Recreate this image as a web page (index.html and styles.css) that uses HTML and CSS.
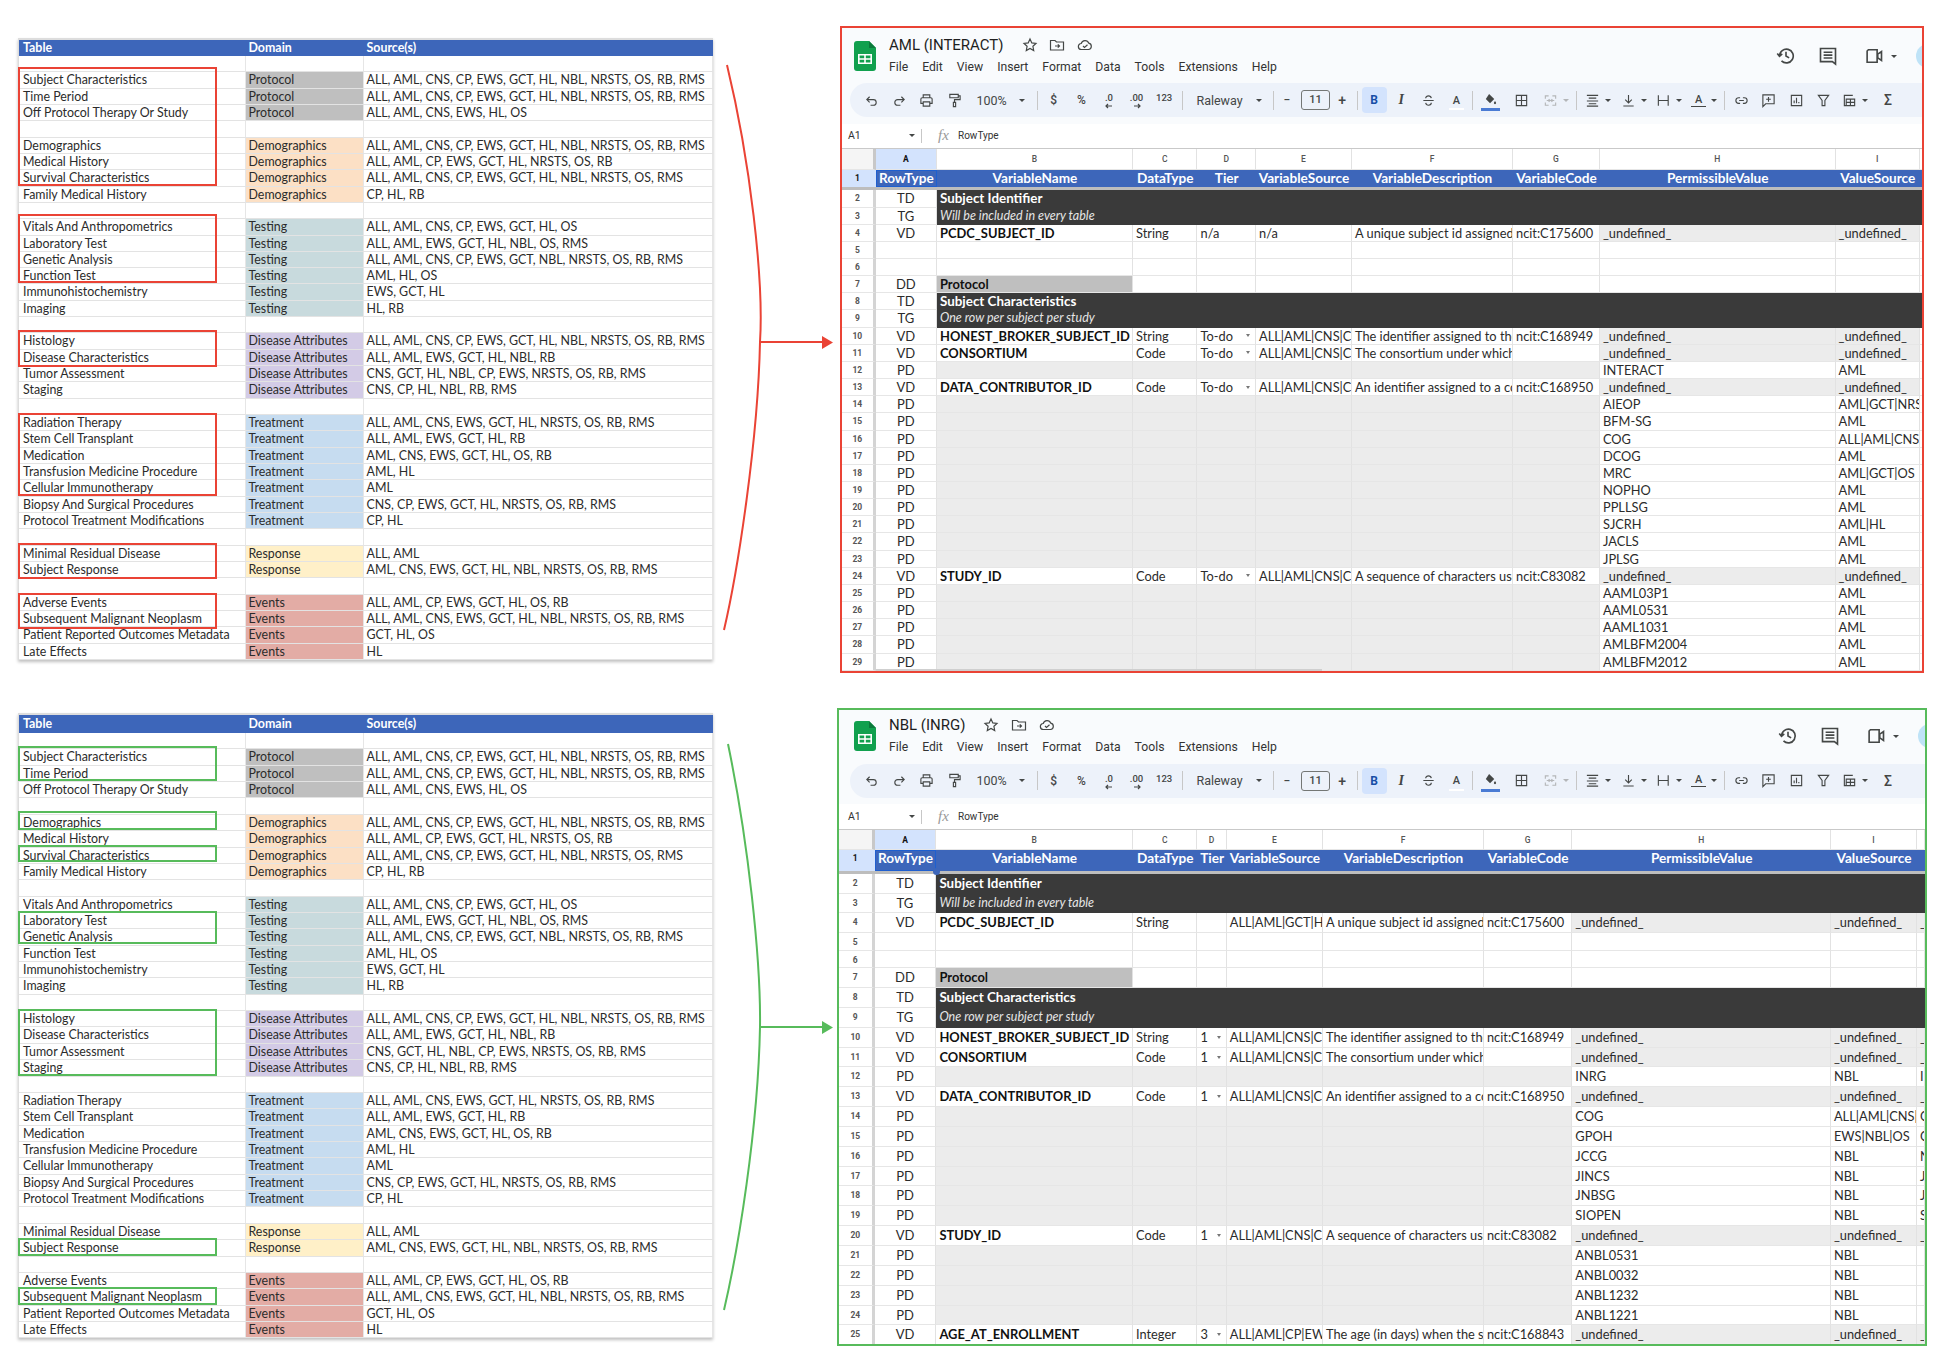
FILE: index.html
```html
<!DOCTYPE html>
<html lang="en">
<head>
    <meta charset="UTF-8">
    <title>AML and NBL data dictionaries</title>
    <link rel="stylesheet" href="styles.css">
</head>
<body>

<!-- icons used by both sheets -->
<svg class="defs" width="0" height="0">
    <symbol id="i-undo" viewBox="0 0 16 16"><path d="M6 4 3 7l3 3M3 7h7a3 3 0 0 1 0 6H7"/></symbol>
    <symbol id="i-redo" viewBox="0 0 16 16"><path d="M10 4l3 3-3 3M13 7H6a3 3 0 0 0 0 6h3"/></symbol>
    <symbol id="i-print" viewBox="0 0 16 16"><path d="M4.5 5V2h7v3M4.5 11H2V6.5A1.5 1.5 0 0 1 3.5 5h9A1.5 1.5 0 0 1 14 6.5V11h-2.5M4.5 9.5h7V14h-7z"/></symbol>
    <symbol id="i-paint" viewBox="0 0 16 16"><path d="M3 1.5h9V5H3zM12 3h2v4H8v3M6.8 10h2.4v4.5H6.8z"/></symbol>
    <symbol id="i-strike" viewBox="0 0 16 16"><path d="M2.5 8h11M11 5.5C10.7 4 9.5 3 8 3S5 4 5 5.5M5 10.5C5.3 12 6.500 13 8 13s3-1 3-2.500"/></symbol>
    <symbol id="i-fill" viewBox="0 0 16 16"><path class="solid" d="M6.500 1 12 6.500 7.500 11 3 6.500zM12.800 8.500c.8 1 1.200 1.600 1.200 2.200a1.200 1.200 0 0 1-2.400 0c0-.6.400-1.200 1.200-2.200z"/></symbol>
    <symbol id="i-borders" viewBox="0 0 16 16"><path d="M2.500 2.500h11v11h-11zM8 2.500v11M2.500 8h11"/></symbol>
    <symbol id="i-merge" viewBox="0 0 16 16"><path d="M2.500 6V3h3.500M13.500 6V3H10M2.500 10v3h3.500M13.500 10v3H10M4 8h3M12 8H9M6 6.500 7.500 8 6 9.500M10 6.500 8.500 8l1.500 1.500"/></symbol>
    <symbol id="i-align" viewBox="0 0 16 16"><path d="M2 2.500h12M4 5.500h8M2 8.500h12M4 11.500h8M2 14h12"/></symbol>
    <symbol id="i-valign" viewBox="0 0 16 16"><path d="M8 2v8M4.500 7 8 10.500 11.500 7M2.500 13.800h11"/></symbol>
    <symbol id="i-wrap" viewBox="0 0 16 16"><path d="M2.500 2.500v11M13 2.500v11M2.500 8H13"/></symbol>
    <symbol id="i-link" viewBox="0 0 16 16"><path d="M6.500 5H5a3 3 0 0 0 0 6h1.500M9.500 5H11a3 3 0 0 1 0 6H9.500M5.500 8h5"/></symbol>
    <symbol id="i-addnote" viewBox="0 0 16 16"><path d="M2 2h12v9.500H5L2 14.500zM8 4.200v5M5.500 6.700h5"/></symbol>
    <symbol id="i-chart" viewBox="0 0 16 16"><path d="M2.500 2.500h11v11h-11zM5.500 11V8M8 11V5M10.500 11V9.500"/></symbol>
    <symbol id="i-filter" viewBox="0 0 16 16"><path d="M2.500 2.500h11L9.500 8v5.500h-3V8z"/></symbol>
    <symbol id="i-calc" viewBox="0 0 16 16"><path d="M11.500 2.500h-9v11h11V6.500H4.500v7M9 6.500v7M4.500 10h9"/></symbol>
    <symbol id="i-history" viewBox="0 0 16 16"><path d="M2.800 8a5.500 5.500 0 1 1 1.600 3.900M1 6l1.800 2.200L5 6.300M8 4.500V8l2.500 1.500"/></symbol>
    <symbol id="i-comments" viewBox="0 0 16 16"><path d="M2 2h12v12.500L11.500 12.500H2zM4.500 5h7M4.500 7.300h7M4.500 9.600h7"/></symbol>
    <symbol id="i-camera" viewBox="0 0 16 16"><path d="M3.500 3h7v10h-8V4zM11 6.500l3-2v7l-3-2z"/></symbol>
    <symbol id="i-star" viewBox="0 0 16 16"><path d="M8 2l1.800 3.900 4.200.5-3.100 2.900.8 4.200L8 11.400l-3.700 2.100.8-4.200L2 6.400l4.200-.5z"/></symbol>
    <symbol id="i-folder" viewBox="0 0 16 16"><path d="M1.500 3.500h4.500l1.500 1.500h7v8h-13zM6 9h4.500M8.800 7.300 10.500 9l-1.700 1.700"/></symbol>
    <symbol id="i-cloud" viewBox="0 0 16 16"><path d="M4.500 12.500a3 3 0 0 1-.3-6 4 4 0 0 1 7.600-.3 3.200 3.200 0 0 1-.3 6.300zM6 9l1.500 1.500L10.500 7.800"/></symbol>
    <symbol id="i-sheets" viewBox="0 0 22 30">
        <path class="g-body" d="M0 3a3 3 0 0 1 3-3h12l7 7v20a3 3 0 0 1-3 3H3a3 3 0 0 1-3-3z"/>
        <path class="g-fold" d="M15 0l7 7h-7z"/>
        <path class="g-grid" d="M4 13h14v10H4zm1.600 1.600v2.600h4.600v-2.600zm6.200 0v2.600h4.600v-2.600zm-6.200 4.200v2.600h4.600v-2.600zm6.200 0v2.600h4.600v-2.600z"/>
    </symbol>
</svg>

<div class="page">

<!-- first pair: AML -->
<div class="pair pair-aml">
    <div class="src src-aml">
        <div class="r head-r"><span>Table</span><span>Domain</span><span>Source(s)</span></div>
        <div class="r"><span></span><span></span><span></span></div>
        <div class="r"><span>Subject Characteristics</span><span class="d-pro">Protocol</span><span>ALL, AML, CNS, CP, EWS, GCT, HL, NBL, NRSTS, OS, RB, RMS</span></div>
        <div class="r"><span>Time Period</span><span class="d-pro">Protocol</span><span>ALL, AML, CNS, CP, EWS, GCT, HL, NBL, NRSTS, OS, RB, RMS</span></div>
        <div class="r"><span>Off Protocol Therapy Or Study</span><span class="d-pro">Protocol</span><span>ALL, AML, CNS, EWS, HL, OS</span></div>
        <div class="r"><span></span><span></span><span></span></div>
        <div class="r"><span>Demographics</span><span class="d-dem">Demographics</span><span>ALL, AML, CNS, CP, EWS, GCT, HL, NBL, NRSTS, OS, RB, RMS</span></div>
        <div class="r"><span>Medical History</span><span class="d-dem">Demographics</span><span>ALL, AML, CP, EWS, GCT, HL, NRSTS, OS, RB</span></div>
        <div class="r"><span>Survival Characteristics</span><span class="d-dem">Demographics</span><span>ALL, AML, CNS, CP, EWS, GCT, HL, NBL, NRSTS, OS, RMS</span></div>
        <div class="r"><span>Family Medical History</span><span class="d-dem">Demographics</span><span>CP, HL, RB</span></div>
        <div class="r"><span></span><span></span><span></span></div>
        <div class="r"><span>Vitals And Anthropometrics</span><span class="d-tes">Testing</span><span>ALL, AML, CNS, CP, EWS, GCT, HL, OS</span></div>
        <div class="r"><span>Laboratory Test</span><span class="d-tes">Testing</span><span>ALL, AML, EWS, GCT, HL, NBL, OS, RMS</span></div>
        <div class="r"><span>Genetic Analysis</span><span class="d-tes">Testing</span><span>ALL, AML, CNS, CP, EWS, GCT, NBL, NRSTS, OS, RB, RMS</span></div>
        <div class="r"><span>Function Test</span><span class="d-tes">Testing</span><span>AML, HL, OS</span></div>
        <div class="r"><span>Immunohistochemistry</span><span class="d-tes">Testing</span><span>EWS, GCT, HL</span></div>
        <div class="r"><span>Imaging</span><span class="d-tes">Testing</span><span>HL, RB</span></div>
        <div class="r"><span></span><span></span><span></span></div>
        <div class="r"><span>Histology</span><span class="d-dis">Disease Attributes</span><span>ALL, AML, CNS, CP, EWS, GCT, HL, NBL, NRSTS, OS, RB, RMS</span></div>
        <div class="r"><span>Disease Characteristics</span><span class="d-dis">Disease Attributes</span><span>ALL, AML, EWS, GCT, HL, NBL, RB</span></div>
        <div class="r"><span>Tumor Assessment</span><span class="d-dis">Disease Attributes</span><span>CNS, GCT, HL, NBL, CP, EWS, NRSTS, OS, RB, RMS</span></div>
        <div class="r"><span>Staging</span><span class="d-dis">Disease Attributes</span><span>CNS, CP, HL, NBL, RB, RMS</span></div>
        <div class="r"><span></span><span></span><span></span></div>
        <div class="r"><span>Radiation Therapy</span><span class="d-tre">Treatment</span><span>ALL, AML, CNS, EWS, GCT, HL, NRSTS, OS, RB, RMS</span></div>
        <div class="r"><span>Stem Cell Transplant</span><span class="d-tre">Treatment</span><span>ALL, AML, EWS, GCT, HL, RB</span></div>
        <div class="r"><span>Medication</span><span class="d-tre">Treatment</span><span>AML, CNS, EWS, GCT, HL, OS, RB</span></div>
        <div class="r"><span>Transfusion Medicine Procedure</span><span class="d-tre">Treatment</span><span>AML, HL</span></div>
        <div class="r"><span>Cellular Immunotherapy</span><span class="d-tre">Treatment</span><span>AML</span></div>
        <div class="r"><span>Biopsy And Surgical Procedures</span><span class="d-tre">Treatment</span><span>CNS, CP, EWS, GCT, HL, NRSTS, OS, RB, RMS</span></div>
        <div class="r"><span>Protocol Treatment Modifications</span><span class="d-tre">Treatment</span><span>CP, HL</span></div>
        <div class="r"><span></span><span></span><span></span></div>
        <div class="r"><span>Minimal Residual Disease</span><span class="d-res">Response</span><span>ALL, AML</span></div>
        <div class="r"><span>Subject Response</span><span class="d-res">Response</span><span>AML, CNS, EWS, GCT, HL, NBL, NRSTS, OS, RB, RMS</span></div>
        <div class="r"><span></span><span></span><span></span></div>
        <div class="r"><span>Adverse Events</span><span class="d-eve">Events</span><span>ALL, AML, CP, EWS, GCT, HL, OS, RB</span></div>
        <div class="r"><span>Subsequent Malignant Neoplasm</span><span class="d-eve">Events</span><span>ALL, AML, CNS, EWS, GCT, HL, NBL, NRSTS, OS, RB, RMS</span></div>
        <div class="r"><span>Patient Reported Outcomes Metadata</span><span class="d-eve">Events</span><span>GCT, HL, OS</span></div>
        <div class="r"><span>Late Effects</span><span class="d-eve">Events</span><span>HL</span></div>
        <!-- highlighted tables -->
        <div class="hl hl-red m1"></div>
        <div class="hl hl-red m2"></div>
        <div class="hl hl-red m3"></div>
        <div class="hl hl-red m4"></div>
        <div class="hl hl-red m5"></div>
        <div class="hl hl-red m6"></div>
    </div>

    <div class="sheet sheet-aml">
        <div class="top">
            <svg class="logo"><use href="#i-sheets"/></svg>
            <div class="titles">
                <div class="title">AML (INTERACT)
                    <svg class="ic ic-first"><use href="#i-star"/></svg>
                    <svg class="ic"><use href="#i-folder"/></svg>
                    <svg class="ic"><use href="#i-cloud"/></svg>
                </div>
                <div class="menu"><span>File</span><span>Edit</span><span>View</span><span>Insert</span><span>Format</span><span>Data</span><span>Tools</span><span>Extensions</span><span>Help</span></div>
            </div>
            <div class="actions">
                <svg class="big"><use href="#i-history"/></svg>
                <svg class="big a-comments"><use href="#i-comments"/></svg>
                <svg class="big a-camera"><use href="#i-camera"/></svg>
                <i class="caret a-caret"></i>
                <i class="avatar"></i>
            </div>
        </div>
        <div class="barwrap">
            <div class="bar">
                <div class="tb"><svg><use href="#i-undo"/></svg></div>
                <div class="tb"><svg><use href="#i-redo"/></svg></div>
                <div class="tb"><svg><use href="#i-print"/></svg></div>
                <div class="tb"><svg><use href="#i-paint"/></svg></div>
                <div class="pick pick-zoom">100%<i class="caret"></i></div>
                <i class="sep"></i>
                <div class="tb txt">$</div>
                <div class="tb txt">%</div>
                <div class="tb txt small">.0<svg class="mini"><path d="M7 2H1M3 0 1 2l2 2"/></svg></div>
                <div class="tb txt small">.00<svg class="mini"><path d="M1 2h6M5 0l2 2-2 2"/></svg></div>
                <div class="tb txt small">123</div>
                <i class="sep sep-font"></i>
                <div class="pick pick-font">Raleway<i class="caret"></i></div>
                <i class="sep"></i>
                <div class="tb txt minus">−</div>
                <div class="size">11</div>
                <div class="tb txt plus">+</div>
                <i class="sep"></i>
                <div class="bold">B</div>
                <div class="tb txt ital">I</div>
                <div class="tb"><svg><use href="#i-strike"/></svg></div>
                <div class="tb txt under">A</div>
                <i class="sep"></i>
                <div class="tb fill"><svg><use href="#i-fill"/></svg></div>
                <div class="tb tb-borders"><svg><use href="#i-borders"/></svg></div>
                <div class="combo off"><svg><use href="#i-merge"/></svg><i class="caret"></i></div>
                <i class="sep sep-align"></i>
                <div class="combo"><svg><use href="#i-align"/></svg><i class="caret"></i></div>
                <div class="combo"><svg><use href="#i-valign"/></svg><i class="caret"></i></div>
                <div class="combo"><svg><use href="#i-wrap"/></svg><i class="caret"></i></div>
                <div class="combo"><span class="rot">A</span><i class="caret"></i></div>
                <i class="sep sep-end"></i>
                <div class="tb"><svg><use href="#i-link"/></svg></div>
                <div class="tb"><svg><use href="#i-addnote"/></svg></div>
                <div class="tb"><svg><use href="#i-chart"/></svg></div>
                <div class="tb"><svg><use href="#i-filter"/></svg></div>
                <div class="combo calc"><svg><use href="#i-calc"/></svg><i class="caret"></i></div>
                <div class="tb txt sigma">Σ</div>
            </div>
        </div>
        <div class="formula"><span class="ref">A1</span><i class="caret"></i><i class="sep"></i><span class="fx">fx</span><span>RowType</span></div>

        <div class="g letters"><span></span><span class="on">A</span><span>B</span><span>C</span><span>D</span><span>E</span><span>F</span><span>G</span><span>H</span><span>I</span><span></span></div>
        <div class="g hr"><span class="n on">1</span><span class="sel">RowType</span><span>VariableName</span><span>DataType</span><span>Tier</span><span>VariableSource</span><span>VariableDescription</span><span>VariableCode</span><span>PermissibleValue</span><span>ValueSource</span><span></span></div>
        <div class="g"><span class="n">2</span><span class="c">TD</span><span class="dark">Subject Identifier</span></div>
        <div class="g"><span class="n">3</span><span class="c">TG</span><span class="dark note">Will be included in every table</span></div>
        <div class="g"><span class="n">4</span><span class="c">VD</span><b>PCDC_SUBJECT_ID</b><span>String</span><span>n/a</span><span>n/a</span><span>A unique subject id assigned to each subject</span><span>ncit:C175600</span><span class="x">_undefined_</span><span class="x">_undefined_</span><span></span></div>
        <div class="g short"><span class="n">5</span><span></span><span></span><span></span><span></span><span></span><span></span><span></span><span></span><span></span><span></span></div>
        <div class="g short"><span class="n">6</span><span></span><span></span><span></span><span></span><span></span><span></span><span></span><span></span><span></span><span></span></div>
        <div class="g"><span class="n">7</span><span class="c">DD</span><b class="pro">Protocol</b><span></span><span></span><span></span><span></span><span></span><span></span><span></span><span></span></div>
        <div class="g"><span class="n">8</span><span class="c">TD</span><span class="dark">Subject Characteristics</span></div>
        <div class="g"><span class="n">9</span><span class="c">TG</span><span class="dark note">One row per subject per study</span></div>
        <div class="g"><span class="n">10</span><span class="c">VD</span><b>HONEST_BROKER_SUBJECT_ID</b><span>String</span><span class="dd">To-do<i class="caret"></i></span><span>ALL|AML|CNS|CP|EWS</span><span>The identifier assigned to the subject</span><span>ncit:C168949</span><span class="x">_undefined_</span><span class="x">_undefined_</span><span></span></div>
        <div class="g"><span class="n">11</span><span class="c">VD</span><b>CONSORTIUM</b><span>Code</span><span class="dd">To-do<i class="caret"></i></span><span>ALL|AML|CNS|CP|EWS</span><span>The consortium under which the study</span><span></span><span class="x">_undefined_</span><span class="x">_undefined_</span><span></span></div>
        <div class="g"><span class="n">12</span><span class="c">PD</span><span class="x"></span><span class="x"></span><span class="x"></span><span class="x"></span><span class="x"></span><span class="x"></span><span>INTERACT</span><span>AML</span><span></span></div>
        <div class="g"><span class="n">13</span><span class="c">VD</span><b>DATA_CONTRIBUTOR_ID</b><span>Code</span><span class="dd">To-do<i class="caret"></i></span><span>ALL|AML|CNS|CP|EWS</span><span>An identifier assigned to a contributor</span><span>ncit:C168950</span><span class="x">_undefined_</span><span class="x">_undefined_</span><span></span></div>
        <div class="g"><span class="n">14</span><span class="c">PD</span><span class="x"></span><span class="x"></span><span class="x"></span><span class="x"></span><span class="x"></span><span class="x"></span><span>AIEOP</span><span>AML|GCT|NRSTS</span><span></span></div>
        <div class="g"><span class="n">15</span><span class="c">PD</span><span class="x"></span><span class="x"></span><span class="x"></span><span class="x"></span><span class="x"></span><span class="x"></span><span>BFM-SG</span><span>AML</span><span></span></div>
        <div class="g"><span class="n">16</span><span class="c">PD</span><span class="x"></span><span class="x"></span><span class="x"></span><span class="x"></span><span class="x"></span><span class="x"></span><span>COG</span><span>ALL|AML|CNS|CP</span><span></span></div>
        <div class="g"><span class="n">17</span><span class="c">PD</span><span class="x"></span><span class="x"></span><span class="x"></span><span class="x"></span><span class="x"></span><span class="x"></span><span>DCOG</span><span>AML</span><span></span></div>
        <div class="g"><span class="n">18</span><span class="c">PD</span><span class="x"></span><span class="x"></span><span class="x"></span><span class="x"></span><span class="x"></span><span class="x"></span><span>MRC</span><span>AML|GCT|OS</span><span></span></div>
        <div class="g"><span class="n">19</span><span class="c">PD</span><span class="x"></span><span class="x"></span><span class="x"></span><span class="x"></span><span class="x"></span><span class="x"></span><span>NOPHO</span><span>AML</span><span></span></div>
        <div class="g"><span class="n">20</span><span class="c">PD</span><span class="x"></span><span class="x"></span><span class="x"></span><span class="x"></span><span class="x"></span><span class="x"></span><span>PPLLSG</span><span>AML</span><span></span></div>
        <div class="g"><span class="n">21</span><span class="c">PD</span><span class="x"></span><span class="x"></span><span class="x"></span><span class="x"></span><span class="x"></span><span class="x"></span><span>SJCRH</span><span>AML|HL</span><span></span></div>
        <div class="g"><span class="n">22</span><span class="c">PD</span><span class="x"></span><span class="x"></span><span class="x"></span><span class="x"></span><span class="x"></span><span class="x"></span><span>JACLS</span><span>AML</span><span></span></div>
        <div class="g"><span class="n">23</span><span class="c">PD</span><span class="x"></span><span class="x"></span><span class="x"></span><span class="x"></span><span class="x"></span><span class="x"></span><span>JPLSG</span><span>AML</span><span></span></div>
        <div class="g"><span class="n">24</span><span class="c">VD</span><b>STUDY_ID</b><span>Code</span><span class="dd">To-do<i class="caret"></i></span><span>ALL|AML|CNS|CP|EWS</span><span>A sequence of characters used to identify</span><span>ncit:C83082</span><span class="x">_undefined_</span><span class="x">_undefined_</span><span></span></div>
        <div class="g"><span class="n">25</span><span class="c">PD</span><span class="x"></span><span class="x"></span><span class="x"></span><span class="x"></span><span class="x"></span><span class="x"></span><span>AAML03P1</span><span>AML</span><span></span></div>
        <div class="g"><span class="n">26</span><span class="c">PD</span><span class="x"></span><span class="x"></span><span class="x"></span><span class="x"></span><span class="x"></span><span class="x"></span><span>AAML0531</span><span>AML</span><span></span></div>
        <div class="g"><span class="n">27</span><span class="c">PD</span><span class="x"></span><span class="x"></span><span class="x"></span><span class="x"></span><span class="x"></span><span class="x"></span><span>AAML1031</span><span>AML</span><span></span></div>
        <div class="g"><span class="n">28</span><span class="c">PD</span><span class="x"></span><span class="x"></span><span class="x"></span><span class="x"></span><span class="x"></span><span class="x"></span><span>AMLBFM2004</span><span>AML</span><span></span></div>
        <div class="g"><span class="n">29</span><span class="c">PD</span><span class="x"></span><span class="x"></span><span class="x"></span><span class="x"></span><span class="x"></span><span class="x"></span><span>AMLBFM2012</span><span>AML</span><span></span></div>
        <div class="scroll"></div>
    </div>
</div>

<!-- second pair: NBL -->
<div class="pair pair-nbl">
    <div class="src src-nbl">
        <div class="r head-r"><span>Table</span><span>Domain</span><span>Source(s)</span></div>
        <div class="r"><span></span><span></span><span></span></div>
        <div class="r"><span>Subject Characteristics</span><span class="d-pro">Protocol</span><span>ALL, AML, CNS, CP, EWS, GCT, HL, NBL, NRSTS, OS, RB, RMS</span></div>
        <div class="r"><span>Time Period</span><span class="d-pro">Protocol</span><span>ALL, AML, CNS, CP, EWS, GCT, HL, NBL, NRSTS, OS, RB, RMS</span></div>
        <div class="r"><span>Off Protocol Therapy Or Study</span><span class="d-pro">Protocol</span><span>ALL, AML, CNS, EWS, HL, OS</span></div>
        <div class="r"><span></span><span></span><span></span></div>
        <div class="r"><span>Demographics</span><span class="d-dem">Demographics</span><span>ALL, AML, CNS, CP, EWS, GCT, HL, NBL, NRSTS, OS, RB, RMS</span></div>
        <div class="r"><span>Medical History</span><span class="d-dem">Demographics</span><span>ALL, AML, CP, EWS, GCT, HL, NRSTS, OS, RB</span></div>
        <div class="r"><span>Survival Characteristics</span><span class="d-dem">Demographics</span><span>ALL, AML, CNS, CP, EWS, GCT, HL, NBL, NRSTS, OS, RMS</span></div>
        <div class="r"><span>Family Medical History</span><span class="d-dem">Demographics</span><span>CP, HL, RB</span></div>
        <div class="r"><span></span><span></span><span></span></div>
        <div class="r"><span>Vitals And Anthropometrics</span><span class="d-tes">Testing</span><span>ALL, AML, CNS, CP, EWS, GCT, HL, OS</span></div>
        <div class="r"><span>Laboratory Test</span><span class="d-tes">Testing</span><span>ALL, AML, EWS, GCT, HL, NBL, OS, RMS</span></div>
        <div class="r"><span>Genetic Analysis</span><span class="d-tes">Testing</span><span>ALL, AML, CNS, CP, EWS, GCT, NBL, NRSTS, OS, RB, RMS</span></div>
        <div class="r"><span>Function Test</span><span class="d-tes">Testing</span><span>AML, HL, OS</span></div>
        <div class="r"><span>Immunohistochemistry</span><span class="d-tes">Testing</span><span>EWS, GCT, HL</span></div>
        <div class="r"><span>Imaging</span><span class="d-tes">Testing</span><span>HL, RB</span></div>
        <div class="r"><span></span><span></span><span></span></div>
        <div class="r"><span>Histology</span><span class="d-dis">Disease Attributes</span><span>ALL, AML, CNS, CP, EWS, GCT, HL, NBL, NRSTS, OS, RB, RMS</span></div>
        <div class="r"><span>Disease Characteristics</span><span class="d-dis">Disease Attributes</span><span>ALL, AML, EWS, GCT, HL, NBL, RB</span></div>
        <div class="r"><span>Tumor Assessment</span><span class="d-dis">Disease Attributes</span><span>CNS, GCT, HL, NBL, CP, EWS, NRSTS, OS, RB, RMS</span></div>
        <div class="r"><span>Staging</span><span class="d-dis">Disease Attributes</span><span>CNS, CP, HL, NBL, RB, RMS</span></div>
        <div class="r"><span></span><span></span><span></span></div>
        <div class="r"><span>Radiation Therapy</span><span class="d-tre">Treatment</span><span>ALL, AML, CNS, EWS, GCT, HL, NRSTS, OS, RB, RMS</span></div>
        <div class="r"><span>Stem Cell Transplant</span><span class="d-tre">Treatment</span><span>ALL, AML, EWS, GCT, HL, RB</span></div>
        <div class="r"><span>Medication</span><span class="d-tre">Treatment</span><span>AML, CNS, EWS, GCT, HL, OS, RB</span></div>
        <div class="r"><span>Transfusion Medicine Procedure</span><span class="d-tre">Treatment</span><span>AML, HL</span></div>
        <div class="r"><span>Cellular Immunotherapy</span><span class="d-tre">Treatment</span><span>AML</span></div>
        <div class="r"><span>Biopsy And Surgical Procedures</span><span class="d-tre">Treatment</span><span>CNS, CP, EWS, GCT, HL, NRSTS, OS, RB, RMS</span></div>
        <div class="r"><span>Protocol Treatment Modifications</span><span class="d-tre">Treatment</span><span>CP, HL</span></div>
        <div class="r"><span></span><span></span><span></span></div>
        <div class="r"><span>Minimal Residual Disease</span><span class="d-res">Response</span><span>ALL, AML</span></div>
        <div class="r"><span>Subject Response</span><span class="d-res">Response</span><span>AML, CNS, EWS, GCT, HL, NBL, NRSTS, OS, RB, RMS</span></div>
        <div class="r"><span></span><span></span><span></span></div>
        <div class="r"><span>Adverse Events</span><span class="d-eve">Events</span><span>ALL, AML, CP, EWS, GCT, HL, OS, RB</span></div>
        <div class="r"><span>Subsequent Malignant Neoplasm</span><span class="d-eve">Events</span><span>ALL, AML, CNS, EWS, GCT, HL, NBL, NRSTS, OS, RB, RMS</span></div>
        <div class="r"><span>Patient Reported Outcomes Metadata</span><span class="d-eve">Events</span><span>GCT, HL, OS</span></div>
        <div class="r"><span>Late Effects</span><span class="d-eve">Events</span><span>HL</span></div>
        <!-- highlighted tables -->
        <div class="hl hl-green n1"></div>
        <div class="hl hl-green n2"></div>
        <div class="hl hl-green n3"></div>
        <div class="hl hl-green n4"></div>
        <div class="hl hl-green n5"></div>
        <div class="hl hl-green n6"></div>
        <div class="hl hl-green n7"></div>
    </div>

    <div class="sheet sheet-nbl">
        <div class="top">
            <svg class="logo"><use href="#i-sheets"/></svg>
            <div class="titles">
                <div class="title">NBL (INRG)
                    <svg class="ic ic-first"><use href="#i-star"/></svg>
                    <svg class="ic"><use href="#i-folder"/></svg>
                    <svg class="ic"><use href="#i-cloud"/></svg>
                </div>
                <div class="menu"><span>File</span><span>Edit</span><span>View</span><span>Insert</span><span>Format</span><span>Data</span><span>Tools</span><span>Extensions</span><span>Help</span></div>
            </div>
            <div class="actions">
                <svg class="big"><use href="#i-history"/></svg>
                <svg class="big a-comments"><use href="#i-comments"/></svg>
                <svg class="big a-camera"><use href="#i-camera"/></svg>
                <i class="caret a-caret"></i>
                <i class="avatar"></i>
            </div>
        </div>
        <div class="barwrap">
            <div class="bar">
                <div class="tb"><svg><use href="#i-undo"/></svg></div>
                <div class="tb"><svg><use href="#i-redo"/></svg></div>
                <div class="tb"><svg><use href="#i-print"/></svg></div>
                <div class="tb"><svg><use href="#i-paint"/></svg></div>
                <div class="pick pick-zoom">100%<i class="caret"></i></div>
                <i class="sep"></i>
                <div class="tb txt">$</div>
                <div class="tb txt">%</div>
                <div class="tb txt small">.0<svg class="mini"><path d="M7 2H1M3 0 1 2l2 2"/></svg></div>
                <div class="tb txt small">.00<svg class="mini"><path d="M1 2h6M5 0l2 2-2 2"/></svg></div>
                <div class="tb txt small">123</div>
                <i class="sep sep-font"></i>
                <div class="pick pick-font">Raleway<i class="caret"></i></div>
                <i class="sep"></i>
                <div class="tb txt minus">−</div>
                <div class="size">11</div>
                <div class="tb txt plus">+</div>
                <i class="sep"></i>
                <div class="bold">B</div>
                <div class="tb txt ital">I</div>
                <div class="tb"><svg><use href="#i-strike"/></svg></div>
                <div class="tb txt under">A</div>
                <i class="sep"></i>
                <div class="tb fill"><svg><use href="#i-fill"/></svg></div>
                <div class="tb tb-borders"><svg><use href="#i-borders"/></svg></div>
                <div class="combo off"><svg><use href="#i-merge"/></svg><i class="caret"></i></div>
                <i class="sep sep-align"></i>
                <div class="combo"><svg><use href="#i-align"/></svg><i class="caret"></i></div>
                <div class="combo"><svg><use href="#i-valign"/></svg><i class="caret"></i></div>
                <div class="combo"><svg><use href="#i-wrap"/></svg><i class="caret"></i></div>
                <div class="combo"><span class="rot">A</span><i class="caret"></i></div>
                <i class="sep sep-end"></i>
                <div class="tb"><svg><use href="#i-link"/></svg></div>
                <div class="tb"><svg><use href="#i-addnote"/></svg></div>
                <div class="tb"><svg><use href="#i-chart"/></svg></div>
                <div class="tb"><svg><use href="#i-filter"/></svg></div>
                <div class="combo calc"><svg><use href="#i-calc"/></svg><i class="caret"></i></div>
                <div class="tb txt sigma">Σ</div>
            </div>
        </div>
        <div class="formula"><span class="ref">A1</span><i class="caret"></i><i class="sep"></i><span class="fx">fx</span><span>RowType</span></div>

        <div class="g letters"><span></span><span class="on">A</span><span>B</span><span>C</span><span>D</span><span>E</span><span>F</span><span>G</span><span>H</span><span>I</span><span></span></div>
        <div class="g hr"><span class="n on">1</span><span class="sel">RowType<i class="dot"></i></span><span>VariableName</span><span>DataType</span><span>Tier</span><span>VariableSource</span><span>VariableDescription</span><span>VariableCode</span><span>PermissibleValue</span><span>ValueSource</span><span></span></div>
        <div class="g"><span class="n">2</span><span class="c">TD</span><span class="dark">Subject Identifier</span></div>
        <div class="g"><span class="n">3</span><span class="c">TG</span><span class="dark note">Will be included in every table</span></div>
        <div class="g"><span class="n">4</span><span class="c">VD</span><b>PCDC_SUBJECT_ID</b><span>String</span><span></span><span>ALL|AML|GCT|HL|NBL</span><span>A unique subject id assigned to each subject</span><span>ncit:C175600</span><span class="x">_undefined_</span><span class="x">_undefined_</span><span class="x">_</span></div>
        <div class="g short"><span class="n">5</span><span></span><span></span><span></span><span></span><span></span><span></span><span></span><span></span><span></span><span></span></div>
        <div class="g short"><span class="n">6</span><span></span><span></span><span></span><span></span><span></span><span></span><span></span><span></span><span></span><span></span></div>
        <div class="g"><span class="n">7</span><span class="c">DD</span><b class="pro">Protocol</b><span></span><span></span><span></span><span></span><span></span><span></span><span></span><span></span></div>
        <div class="g"><span class="n">8</span><span class="c">TD</span><span class="dark">Subject Characteristics</span></div>
        <div class="g"><span class="n">9</span><span class="c">TG</span><span class="dark note">One row per subject per study</span></div>
        <div class="g"><span class="n">10</span><span class="c">VD</span><b>HONEST_BROKER_SUBJECT_ID</b><span>String</span><span class="dd">1<i class="caret"></i></span><span>ALL|AML|CNS|CP|EWS</span><span>The identifier assigned to the subject</span><span>ncit:C168949</span><span class="x">_undefined_</span><span class="x">_undefined_</span><span class="x">_</span></div>
        <div class="g"><span class="n">11</span><span class="c">VD</span><b>CONSORTIUM</b><span>Code</span><span class="dd">1<i class="caret"></i></span><span>ALL|AML|CNS|CP|EWS</span><span>The consortium under which the study</span><span></span><span class="x">_undefined_</span><span class="x">_undefined_</span><span class="x">_</span></div>
        <div class="g"><span class="n">12</span><span class="c">PD</span><span class="x"></span><span class="x"></span><span class="x"></span><span class="x"></span><span class="x"></span><span class="x"></span><span>INRG</span><span>NBL</span><span>I</span></div>
        <div class="g"><span class="n">13</span><span class="c">VD</span><b>DATA_CONTRIBUTOR_ID</b><span>Code</span><span class="dd">1<i class="caret"></i></span><span>ALL|AML|CNS|CP|EWS</span><span>An identifier assigned to a contributor</span><span>ncit:C168950</span><span class="x">_undefined_</span><span class="x">_undefined_</span><span class="x">_</span></div>
        <div class="g"><span class="n">14</span><span class="c">PD</span><span class="x"></span><span class="x"></span><span class="x"></span><span class="x"></span><span class="x"></span><span class="x"></span><span>COG</span><span>ALL|AML|CNS|CP</span><span>C</span></div>
        <div class="g"><span class="n">15</span><span class="c">PD</span><span class="x"></span><span class="x"></span><span class="x"></span><span class="x"></span><span class="x"></span><span class="x"></span><span>GPOH</span><span>EWS|NBL|OS</span><span>C</span></div>
        <div class="g"><span class="n">16</span><span class="c">PD</span><span class="x"></span><span class="x"></span><span class="x"></span><span class="x"></span><span class="x"></span><span class="x"></span><span>JCCG</span><span>NBL</span><span>N</span></div>
        <div class="g"><span class="n">17</span><span class="c">PD</span><span class="x"></span><span class="x"></span><span class="x"></span><span class="x"></span><span class="x"></span><span class="x"></span><span>JINCS</span><span>NBL</span><span>J</span></div>
        <div class="g"><span class="n">18</span><span class="c">PD</span><span class="x"></span><span class="x"></span><span class="x"></span><span class="x"></span><span class="x"></span><span class="x"></span><span>JNBSG</span><span>NBL</span><span>J</span></div>
        <div class="g"><span class="n">19</span><span class="c">PD</span><span class="x"></span><span class="x"></span><span class="x"></span><span class="x"></span><span class="x"></span><span class="x"></span><span>SIOPEN</span><span>NBL</span><span>S</span></div>
        <div class="g"><span class="n">20</span><span class="c">VD</span><b>STUDY_ID</b><span>Code</span><span class="dd">1<i class="caret"></i></span><span>ALL|AML|CNS|CP|EWS</span><span>A sequence of characters used to identify</span><span>ncit:C83082</span><span class="x">_undefined_</span><span class="x">_undefined_</span><span class="x">_</span></div>
        <div class="g"><span class="n">21</span><span class="c">PD</span><span class="x"></span><span class="x"></span><span class="x"></span><span class="x"></span><span class="x"></span><span class="x"></span><span>ANBL0531</span><span>NBL</span><span></span></div>
        <div class="g"><span class="n">22</span><span class="c">PD</span><span class="x"></span><span class="x"></span><span class="x"></span><span class="x"></span><span class="x"></span><span class="x"></span><span>ANBL0032</span><span>NBL</span><span></span></div>
        <div class="g"><span class="n">23</span><span class="c">PD</span><span class="x"></span><span class="x"></span><span class="x"></span><span class="x"></span><span class="x"></span><span class="x"></span><span>ANBL1232</span><span>NBL</span><span></span></div>
        <div class="g"><span class="n">24</span><span class="c">PD</span><span class="x"></span><span class="x"></span><span class="x"></span><span class="x"></span><span class="x"></span><span class="x"></span><span>ANBL1221</span><span>NBL</span><span></span></div>
        <div class="g"><span class="n">25</span><span class="c">VD</span><b>AGE_AT_ENROLLMENT</b><span>Integer</span><span class="dd">3<i class="caret"></i></span><span>ALL|AML|CP|EWS|GCT</span><span>The age (in days) when the subject enrolled</span><span>ncit:C168843</span><span class="x">_undefined_</span><span class="x">_undefined_</span><span class="x">_</span></div>
    </div>
</div>

<!-- arrows between the lists and the sheets -->
<svg class="arrows" width="1946" height="1357">
    <path class="red" d="M727 65C750 160 764 280 760 342C758 440 738 570 724 630M760 342H823"/>
    <path class="red-head" d="M822 336l11 6.500-11 6.500z"/>
    <path class="green" d="M728 744C748 840 761 960 760 1027C758 1130 738 1250 724 1310M760 1027H823"/>
    <path class="green-head" d="M822 1021l11 6.500-11 6.500z"/>
</svg>

</div>
</body>
</html>
```

FILE: styles.css
```css
* {
    box-sizing: border-box;
}

body {
    margin: 0;
    background: #fff;
    font-family: "Lato", "Liberation Sans", sans-serif;
    color: #2b2b2b;
}

.defs {
    position: absolute;
}

.page {
    position: relative;
    width: 1946px;
    height: 1357px;
    overflow: hidden;
}

.pair {
    display: flex;
    justify-content: space-between;
    align-items: flex-start;
    padding-left: 18px;
}

.pair-aml {
    height: 708px;
    padding-top: 26px;
    padding-right: 22px;
}

.pair-nbl {
    height: 649px;
    padding-right: 19px;
}

/* the lists on the left */
.src {
    position: relative;
    width: 695px;
    font-size: 12.400px;
    box-shadow: 0 2px 3px rgba(0, 0, 0, .25);
    border-left: 1px solid #ddd;
    border-top: 2px solid #ddd;
}

.src-aml {
    margin-top: 11.500px;
    --h: 16.330px;
    --hh: 16.400px;
}

.src-nbl {
    margin-top: 5px;
    --h: 16.360px;
    --hh: 18px;
}

.r {
    display: grid;
    grid-template-columns: 226.500px 118px 349.500px;
    height: var(--h);
    line-height: 16.500px;
    border-bottom: 1px solid #e3e3e3;
}

.r span {
    padding-left: 3px;
    white-space: nowrap;
    overflow: hidden;
    border-right: 1px solid #e6e6e6;
}

.r span:first-child {
    padding-left: 4px;
}

.head-r {
    height: var(--hh);
    line-height: var(--hh);
    background: #3d66ba;
    color: #fff;
    font-weight: 700;
    border: 0;
}

.head-r span {
    border: 0;
}

.d-pro { background: #bfbfbf; }
.d-dem { background: #fce0c5; }
.d-tes { background: #c8dadd; }
.d-dis { background: #d3cbe6; }
.d-tre { background: #c6dcf0; }
.d-res { background: #fff0c8; }
.d-eve { background: #e3aca5; }

/* outlined groups of rows */
.hl {
    position: absolute;
    left: -1px;
    width: 199px;
    border-style: solid;
    border-width: 2px;
}

.hl-red { border-color: #ea4335; }
.hl-green { border-color: #57bb5b; }

.m1 { top: 27px; height: 119px; }
.m2 { top: 174.500px; height: 69px; }
.m3 { top: 290.500px; height: 36.500px; }
.m4 { top: 373.500px; height: 82.500px; }
.m5 { top: 503px; height: 36px; }
.m6 { top: 553.500px; height: 35.500px; }

.n1 { top: 30.500px; height: 35.700px; }
.n2 { top: 95.500px; height: 19px; }
.n3 { top: 130px; height: 17.300px; }
.n4 { top: 195.500px; height: 33px; }
.n5 { top: 294px; height: 67.300px; }
.n6 { top: 523.300px; height: 17.300px; }
.n7 { top: 572px; height: 17.600px; }

/* the sheet windows */
.sheet {
    position: relative;
    overflow: hidden;
    background: #fff;
    border-style: solid;
    border-width: 2px;
    font-size: 12.800px;
}

.sheet-aml {
    width: 1084px;
    height: 647px;
    border-color: #ea4335;
    --edge: 8px;
    --top: 55.300px;
    --pad: 13px;
    --form: 24px;
    --lett: 21.700px;
    --rowh: 17.170px;
    --shorth: 17.170px;
    --hrh: 20.700px;
    --sepw: 3.700px;
    --actions: -18px;
    --cols: 33.700px 61.300px 196px 64.500px 58.500px 96px 161px 87px 235.600px 84.400px 1fr;
}

.sheet-nbl {
    width: 1090px;
    height: 638px;
    border-color: #57bb5b;
    --edge: 11px;
    --top: 53.700px;
    --pad: 11px;
    --form: 25px;
    --lett: 21px;
    --rowh: 19.850px;
    --shorth: 17.500px;
    --hrh: 23.300px;
    --sepw: 3.600px;
    --actions: -17px;
    --cols: 35.600px 61.800px 196.600px 64.500px 29.300px 96.200px 161px 88.400px 258.600px 86px 1fr;
}

.top {
    display: flex;
    height: var(--top);
    padding: var(--pad) 0 0 calc(var(--edge) + 4px);
    background: #f9fbfd;
}

.logo {
    flex: none;
    width: 22px;
    height: 30px;
}

.g-body { fill: #11a04e; }
.g-fold { fill: #0b7a3b; }
.g-grid { fill: #fff; fill-rule: evenodd; }

.titles {
    margin-left: 13px;
}

.title {
    display: flex;
    align-items: center;
    height: 20px;
    margin-top: -6px;
    font-family: "Roboto", sans-serif;
    font-size: 15px;
    color: #1f1f1f;
}

.ic {
    width: 16px;
    height: 16px;
    margin-left: 11.600px;
    fill: none;
    stroke: #444746;
    stroke-width: 1.200;
}

.ic-first {
    margin-left: 18px;
}

.menu {
    display: flex;
    gap: 14px;
    margin-top: 3.500px;
    line-height: 16px;
    font-family: "Roboto", sans-serif;
    font-size: 12.200px;
    color: #333;
}

.actions {
    display: flex;
    align-items: center;
    margin-left: auto;
    margin-right: var(--actions);
    height: 20px;
    margin-top: 5px;
}

.big {
    width: 20px;
    height: 20px;
    fill: none;
    stroke: #444746;
    stroke-width: 1.300;
}

.a-comments { margin-left: 22.500px; }
.a-camera { margin-left: 26px; }
.a-caret { margin-left: 7px; }

.avatar {
    width: 24px;
    height: 24px;
    margin-left: 19px;
    border-radius: 50%;
    background: #bfe3f7;
}

.barwrap {
    height: 40.700px;
    padding: 0 0 6.700px var(--edge);
    background: #f9fbfd;
}

.bar {
    display: flex;
    align-items: center;
    height: 34px;
    padding-left: 8px;
    border-radius: 17px 0 0 17px;
    background: #edf2fa;
    color: #444746;
    font-size: 11.500px;
}

.bar svg {
    width: 15px;
    height: 15px;
    fill: none;
    stroke: #444746;
    stroke-width: 1.200;
}

.tb {
    position: relative;
    display: flex;
    flex: none;
    align-items: center;
    justify-content: center;
    width: 27.600px;
    height: 20px;
    font-family: "Roboto", sans-serif;
}

.txt {
    font-size: 12px;
    font-weight: 500;
}

.small {
    font-size: 9.500px;
    align-items: flex-start;
    line-height: 15px;
}

.bar .mini {
    position: absolute;
    left: 10px;
    top: 14px;
    width: 8px;
    height: 4px;
    overflow: visible;
}

.sep {
    flex: none;
    width: 1px;
    height: 19px;
    margin: 0 2px;
    background: #c7c7c7;
}

.sep-font { margin-left: 4.500px; }
.sep-align { margin-left: 4.500px; }
.sep-end { margin-left: 4px; }

.caret {
    display: inline-block;
    flex: none;
    width: 0;
    height: 0;
    border-left: 3px solid transparent;
    border-right: 3px solid transparent;
    border-top: 3.500px solid #444746;
}

.pick {
    display: flex;
    flex: none;
    align-items: center;
    justify-content: space-between;
    font-family: "Roboto", sans-serif;
    font-size: 12.500px;
}

.pick-zoom {
    width: 66.600px;
    padding: 0 9.500px 0 8px;
}

.pick-font {
    width: 83.500px;
    padding: 0 9px 0 9px;
    margin-left: 2px;
}

.minus {
    width: 22px;
}

.size {
    flex: none;
    width: 29px;
    height: 20px;
    margin-left: 3px;
    border: 1px solid #747775;
    border-radius: 3px;
    font-family: "Roboto", sans-serif;
    font-size: 11px;
    font-weight: 500;
    line-height: 18px;
    text-align: center;
}

.plus {
    width: 24.600px;
    font-size: 14px;
}

.bold {
    flex: none;
    width: 25px;
    height: 26px;
    margin-left: 2px;
    border-radius: 4px;
    background: #d3e3fd;
    font-family: "Roboto", sans-serif;
    font-size: 12px;
    font-weight: 700;
    line-height: 26px;
    text-align: center;
    color: #174ea6;
}

.ital {
    margin-left: 1px;
    font-family: "Liberation Serif", serif;
    font-style: italic;
    font-size: 14px;
    font-weight: 700;
}

.under {
    font-size: 11px;
}

.under::after {
    content: "";
    position: absolute;
    left: 6px;
    right: 6px;
    bottom: 0;
    height: 2px;
    background: #fff;
}

.fill {
    margin-left: 1.300px;
}

.fill::after {
    content: "";
    position: absolute;
    left: 4px;
    right: 4px;
    bottom: -1px;
    height: 3px;
    background: #4a7bd4;
}

.solid {
    fill: #444746;
    stroke: none;
}

.tb-borders {
    margin-left: 3px;
}

.combo {
    display: flex;
    flex: none;
    align-items: center;
    width: 35.200px;
    padding-left: 6px;
    font-family: "Roboto", sans-serif;
}

.combo .caret {
    margin-left: 5px;
}

.off {
    margin-left: 2px;
}

.off svg {
    stroke: #b4b6b8;
}

.off .caret {
    border-top-color: #b4b6b8;
}

.calc {
    margin-left: -2px;
}

.sigma {
    margin-left: 3.500px;
    font-size: 14px;
}

.rot {
    width: 15px;
    font-size: 11px;
    font-weight: 500;
    line-height: 12px;
    text-align: center;
    border-bottom: 1px solid #444746;
}

.formula {
    display: flex;
    align-items: center;
    height: var(--form);
    padding-left: calc(var(--edge) - 2px);
    font-family: "Roboto", sans-serif;
    font-size: 10px;
    color: #333;
}

.ref {
    width: 61px;
    font-size: 10.500px;
}

.formula .sep {
    margin: 0 16px 0 6px;
    height: 14px;
}

.fx {
    width: 20px;
    font-family: "Liberation Serif", serif;
    font-style: italic;
    font-size: 15px;
    color: #999;
}

/* sheet grid */
.g {
    display: grid;
    grid-template-columns: var(--cols);
    height: var(--rowh);
    line-height: calc(var(--rowh) - 1px);
}

.g.short {
    height: var(--shorth);
}

.g > * {
    min-width: 0;
    padding: 0 3px;
    white-space: nowrap;
    overflow: hidden;
    border-right: 1px solid #e2e2e2;
    border-bottom: 1px solid #e6e6e6;
}

.g b {
    font-size: 12.900px;
    color: #111;
}

.n {
    padding: 0;
    text-align: center;
    font-family: "Roboto", sans-serif;
    font-size: 8.500px;
    font-weight: 700;
    color: #555;
    background: #fff;
    border-right: var(--sepw) solid #d4d4d4 !important;
}

.c {
    text-align: center;
    font-size: 13px;
}

.x {
    background: #ececec;
}

.dark {
    grid-column: 3 / -1;
    background: #3a3a3a;
    color: #fff;
    font-size: 13.400px;
    font-weight: 700;
    border-color: #3a3a3a !important;
}

.note {
    font-size: 12.500px;
    font-weight: 400;
    font-style: italic;
    color: #e6e6e6;
}

.g .pro {
    background: #bfbfbf;
}

.dd {
    display: flex;
    align-items: center;
    justify-content: space-between;
}

.dd .caret {
    margin-right: 2px;
    border-left-width: 2.500px;
    border-right-width: 2.500px;
    border-top-color: #777;
}

.letters {
    height: var(--lett);
    line-height: 20px;
    border-top: 1px solid #c9c9c9;
    text-align: center;
    font-family: "Roboto", sans-serif;
    font-size: 8.500px;
    font-weight: 500;
    color: #555;
}

.letters > :first-child {
    background: #f5f5f5;
    border-right: var(--sepw) solid #c8c8c8;
}

.letters .on {
    background: #d3e3fd;
    color: #111;
    font-weight: 700;
}

.hr {
    height: var(--hrh);
    line-height: 17px;
    border-bottom: 3.500px solid #bdbdbd;
}

.hr > * {
    padding: 0;
    background: #3d66ba;
    color: #fff;
    font-size: 13.600px;
    font-weight: 700;
    text-align: center;
    border: 0;
    overflow: visible;
}

.hr .n {
    background: #d3e3fd;
    color: #111;
    font-size: 8.500px;
    font-weight: 700;
    border-color: #d3e3fd !important;
}

.hr :last-child {
    background: #3d66ba;
}

.sel {
    position: relative;
    outline: 1px solid #1f5fcf;
    outline-offset: -1px;
}

.dot {
    position: absolute;
    right: -4px;
    bottom: -4px;
    width: 7px;
    height: 7px;
    border-radius: 50%;
    background: #0b57d0;
}

.scroll {
    position: absolute;
    left: 34px;
    width: 446px;
    bottom: 0;
    height: 2px;
    background: #cfcfcf;
    padding: 0;
}

/* arrows */
.arrows {
    position: absolute;
    left: 0;
    top: 0;
    pointer-events: none;
}

.red, .green {
    fill: none;
    stroke-width: 2;
}

.red { stroke: #ea4335; }
.green { stroke: #57bb5b; }
.red-head { fill: #ea4335; }
.green-head { fill: #57bb5b; }
```
